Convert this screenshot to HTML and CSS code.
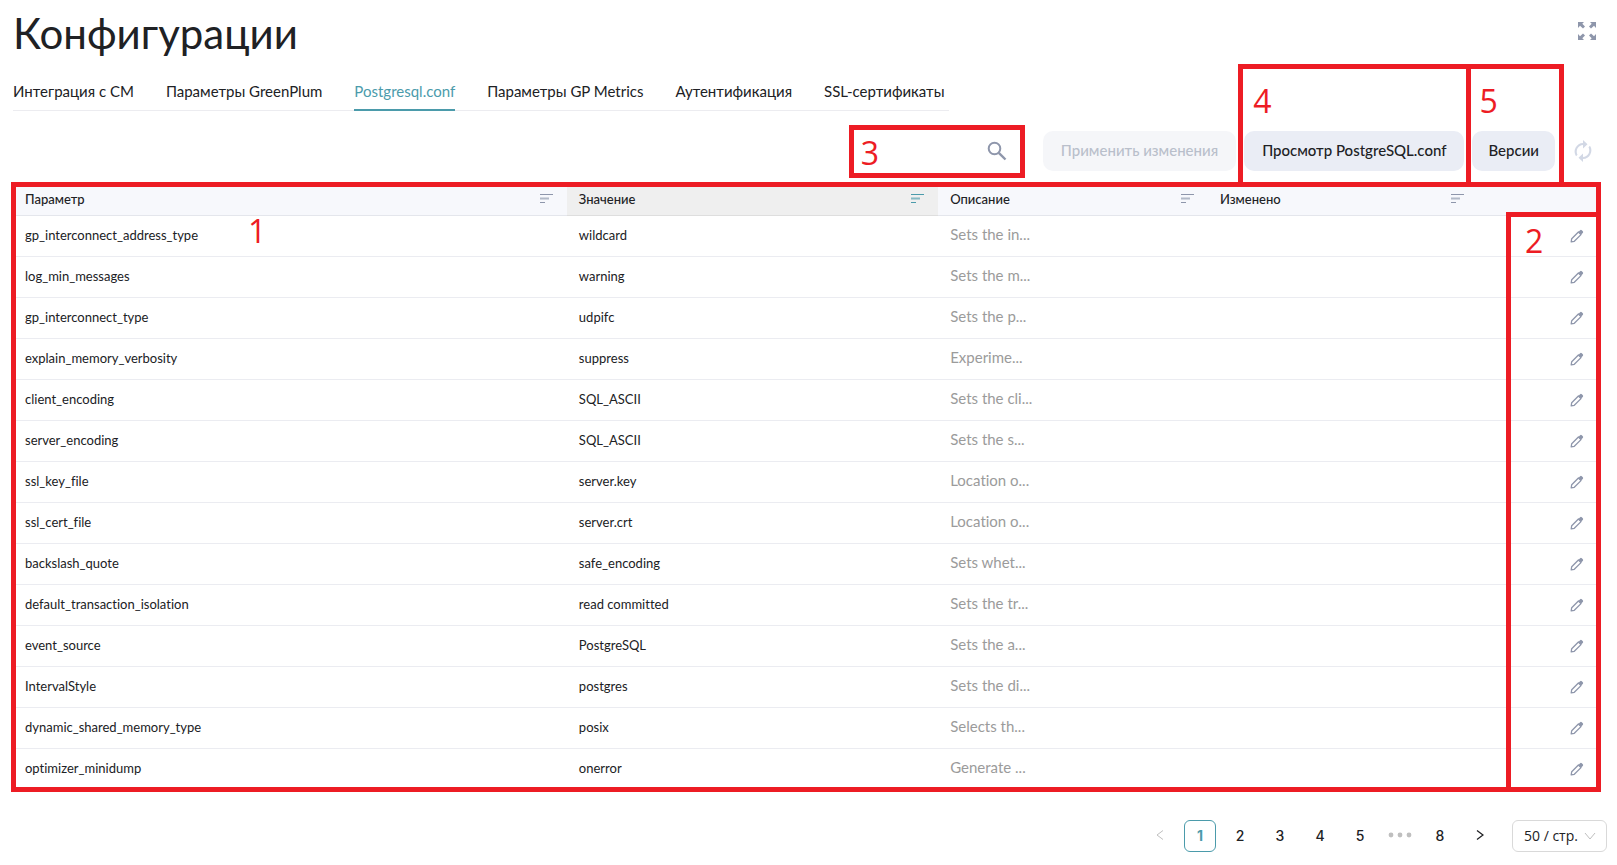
FILE: index.html
```html
<!DOCTYPE html>
<html lang="ru">
<head>
<meta charset="utf-8">
<meta name="viewport" content="width=device-width, initial-scale=1">
<title>Конфигурации</title>
<link rel="stylesheet" href="styles.css">
</head>
<body>
<svg class="sprite" aria-hidden="true">
  <symbol id="i-sort" viewBox="0 0 13 9">
    <path d="M0 .5h13M0 8.5h5" stroke="currentColor" fill="none"/>
    <path d="M0 4.5h9" stroke="currentColor" stroke-width="2" opacity=".65" fill="none"/>
  </symbol>
  <symbol id="i-edit" viewBox="0 0 14 14">
    <path d="M1.2 12.8l.5-3.1 6.7-6.7 2.6 2.6-6.7 6.7z" fill="none" stroke="currentColor" stroke-width="1.3" stroke-linejoin="round"/>
    <path d="M8.4 2.9l1.7-1.7a1.2 1.2 0 0 1 1.7 0l1 1a1.2 1.2 0 0 1 0 1.7l-1.7 1.7z" fill="currentColor"/>
  </symbol>
</svg>
<main class="page">
  <header class="head">
    <h1 class="title">Конфигурации</h1>
    <button class="icon-btn" type="button" aria-label="На весь экран">
      <svg width="20" height="20" viewBox="0 0 20 20" fill="currentColor"><path d="M1 1h6L5.300 2.700 8 5.600 6 7.500 3 4.800 1 7zM19 1h-6l1.700 1.700L12 5.600 14 7.500 17 4.800 19 7zM1 19h6L5.300 17.300 8 14.400 6 12.500 3 15.200 1 13zM19 19h-6l1.700-1.700L12 14.400 14 12.500 17 15.200 19 13z"/></svg>
    </button>
  </header>
  <nav class="tabs">
    <a class="tab" href="#cm">Интеграция с CM</a>
    <a class="tab" href="#greenplum">Параметры GreenPlum</a>
    <a class="tab tab-active" href="#postgresql" aria-current="page">Postgresql.conf</a>
    <a class="tab" href="#metrics">Параметры GP Metrics</a>
    <a class="tab" href="#auth">Аутентификация</a>
    <a class="tab" href="#ssl">SSL-сертификаты</a>
  </nav>
  <div class="toolbar">
    <div class="search">
      <input class="search-input" type="search" aria-label="Поиск">
      <svg class="search-icon" width="20" height="20" viewBox="0 0 20 20" fill="none" stroke="currentColor"><circle cx="7.500" cy="7.500" r="5.800" stroke-width="2"/><path d="M11.800 11.800l6.700 6.700" stroke-width="2.400"/></svg>
      <div class="mark mark-search">3</div>
    </div>
    <button class="btn btn-wide" type="button" disabled>Применить изменения</button>
    <div class="marked">
      <button class="btn btn-wide" type="button">Просмотр PostgreSQL.conf</button>
      <div class="mark mark-view">4</div>
    </div>
    <div class="marked">
      <button class="btn" type="button">Версии</button>
      <div class="mark mark-versions">5</div>
    </div>
    <button class="icon-btn refresh" type="button" aria-label="Обновить">
      <svg width="24" height="24" viewBox="0 0 24 24" fill="currentColor"><path d="M12 4V1L16.500 5.200 12 9.500V6a6.600 6.600 0 0 0-5.500 9.700L5 17.200A8.600 8.600 0 0 1 12 4zM12 20v3L7.500 18.800 12 14.500V18a6.600 6.600 0 0 0 5.500-9.700L19 6.800A8.600 8.600 0 0 1 12 20z"/></svg>
    </button>
  </div>
  <section class="table-wrap">
    <table class="table">
      <colgroup><col class="c-name"><col class="c-value"><col class="c-desc"><col class="c-changed"><col></colgroup>
      <thead>
        <tr>
          <th><div class="th">Параметр<svg width="13" height="9"><use href="#i-sort"/></svg></div></th>
          <th class="sorted" aria-sort="descending"><div class="th">Значение<svg width="13" height="9"><use href="#i-sort"/></svg></div></th>
          <th><div class="th">Описание<svg width="13" height="9"><use href="#i-sort"/></svg></div></th>
          <th><div class="th">Изменено<svg width="13" height="9"><use href="#i-sort"/></svg></div></th>
          <th></th>
        </tr>
      </thead>
      <tbody id="rows"></tbody>
    </table>
    <div class="mark mark-table">1</div>
    <div class="mark mark-edit">2</div>
  </section>
  <nav class="pager" aria-label="Страницы">
    <button class="page-btn" type="button" disabled aria-label="Назад"><svg width="8" height="12" viewBox="0 0 8 12" fill="none" stroke="currentColor"><path d="M7 1.500L1 6l6 4.500"/></svg></button>
    <button class="page-btn page-current" type="button" aria-current="page">1</button>
    <button class="page-btn" type="button">2</button>
    <button class="page-btn" type="button">3</button>
    <button class="page-btn" type="button">4</button>
    <button class="page-btn" type="button">5</button>
    <button class="page-btn page-more" type="button" aria-label="Ещё"><svg width="24" height="6" viewBox="0 0 24 6" fill="currentColor"><circle cx="3" cy="3" r="2.400"/><circle cx="12" cy="3" r="2.400"/><circle cx="21" cy="3" r="2.400"/></svg></button>
    <button class="page-btn" type="button">8</button>
    <button class="page-btn" type="button" aria-label="Вперёд"><svg width="8" height="12" viewBox="0 0 8 12" fill="none" stroke="currentColor" stroke-width="1.300"><path d="M1 1.500L7 6l-6 4.500"/></svg></button>
    <div class="size">
      <select class="size-select" aria-label="Строк на странице"><option>50 / стр.</option></select>
      <svg class="size-arrow" width="12" height="8" viewBox="0 0 12 8" fill="none" stroke="currentColor"><path d="M1 1l5 6 5-6"/></svg>
    </div>
  </nav>
</main>
<script src="rows.js"></script>
</body>
</html>
```
FILE: rows.js
```js
const rows = [
  ["gp_interconnect_address_type", "wildcard", "Sets the in..."],
  ["log_min_messages", "warning", "Sets the m..."],
  ["gp_interconnect_type", "udpifc", "Sets the p..."],
  ["explain_memory_verbosity", "suppress", "Experime..."],
  ["client_encoding", "SQL_ASCII", "Sets the cli..."],
  ["server_encoding", "SQL_ASCII", "Sets the s..."],
  ["ssl_key_file", "server.key", "Location o..."],
  ["ssl_cert_file", "server.crt", "Location o..."],
  ["backslash_quote", "safe_encoding", "Sets whet..."],
  ["default_transaction_isolation", "read committed", "Sets the tr..."],
  ["event_source", "PostgreSQL", "Sets the a..."],
  ["IntervalStyle", "postgres", "Sets the di..."],
  ["dynamic_shared_memory_type", "posix", "Selects th..."],
  ["optimizer_minidump", "onerror", "Generate ..."]
];

document.getElementById("rows").innerHTML = rows.map(([name, value, desc]) => `
  <tr>
    <td>${name}</td>
    <td>${value}</td>
    <td class="desc">${desc}</td>
    <td></td>
    <td class="actions"><button class="icon-btn" type="button" aria-label="Изменить ${name}"><svg width="14" height="14"><use href="#i-edit"/></svg></button></td>
  </tr>`).join("");
```
FILE: styles.css
```css
* { box-sizing: border-box; }

body {
  margin: 0;
  background: #fff;
  color: #202124;
  font-family: Lato, "Open Sans", sans-serif;
  font-size: 15px;
  font-variant-ligatures: none;
}

button, input, select { font: inherit; color: inherit; font-variant-ligatures: none; }
button { cursor: pointer; }
svg { display: block; flex: none; }
.sprite { position: absolute; width: 0; height: 0; }

.page { padding: 7px 10px 12px 13px; }

.head {
  display: flex;
  align-items: flex-start;
  justify-content: space-between;
  padding-right: 10px;
}
.title { margin: 0; font-size: 42px; line-height: 52px; font-weight: 400; }

.icon-btn {
  display: flex;
  padding: 0;
  border: 0;
  background: none;
  color: #8e96ab;
}
.head .icon-btn { margin-top: 14px; }

.tabs {
  display: flex;
  gap: 32px;
  width: fit-content;
  margin-top: 21px;
  padding-right: 4px;
  box-shadow: inset 0 -1px #ececf0;
}
.tab {
  padding-bottom: 7px;
  border-bottom: 2px solid transparent;
  line-height: 22px;
  color: inherit;
  text-decoration: none;
  white-space: nowrap;
}
.tab-active { color: #4b9bab; border-color: #4b9bab; }

.toolbar {
  display: flex;
  justify-content: flex-end;
  gap: 8px;
  margin: 20px 12px 11px 0;
}
.search { position: relative; width: 164px; margin-right: 16px; }
.search-input {
  width: 100%;
  height: 40px;
  padding: 0 40px 0 28px;
  border: 0;
  outline: 0;
  background: none;
}
.search-icon { position: absolute; top: 10px; right: 12px; color: #8e96ab; }

.btn {
  height: 40px;
  padding: 0 16px 2px;
  border: 0;
  border-radius: 10px;
  background: #eaedf5;
  font-weight: 500;
  white-space: nowrap;
}
.btn-wide { padding: 0 18px 2px; }
.btn:disabled { background: #f5f6f9; color: #b9bfcb; cursor: default; }
.marked { position: relative; }
.refresh { align-items: center; margin-left: 8px; color: #d2d8e5; }

.table-wrap { position: relative; margin-right: 7px; }
.table {
  width: 100%;
  border-collapse: separate;
  border-spacing: 0;
  table-layout: fixed;
  font-size: 13px;
}
.c-name { width: 34.900%; }
.c-value { width: 23.400%; }
.c-desc, .c-changed { width: 17%; }
.table th {
  height: 34px;
  padding: 0 14px 0 12px;
  border-bottom: 1px solid #e4e6ec;
  background: #f7f8fc;
  font-weight: 500;
  text-align: left;
}
.table th svg { color: #8e96ab; }
.table .sorted { background: #efefef; border-color: #dedede; }
.table .sorted svg { color: #4b9bab; }
.th { display: flex; align-items: center; justify-content: space-between; }
.table td { height: 41px; padding: 0 12px 2px; border-bottom: 1px solid #ebecf1; }
.table .desc { color: #9b9b9b; font-size: 15px; padding-bottom: 4px; }
.table .actions { padding-right: 16px; padding-bottom: 0; }
.actions .icon-btn { margin-left: auto; }

.mark {
  position: absolute;
  border: 5px solid #ed1c24;
  color: #ed1c24;
  font: 32px/32px "Open Sans", sans-serif;
  pointer-events: none;
}
.mark-table { inset: 0 -1px -2px -2px; padding: 28px 232px; }
.mark-edit { inset: 30px -1px -2px auto; width: 95px; padding: 8px 14px; }
.mark-search { inset: -6px -6px -7px; padding: 7px; }
.mark-view { inset: -67px -7px -16px -6px; padding: 16px 10px; }
.mark-versions { inset: -67px -9px -16px -6px; padding: 16px 8px; }

.pager {
  display: flex;
  justify-content: flex-end;
  gap: 8px;
  margin-top: 30px;
}
.page-btn {
  display: flex;
  align-items: center;
  justify-content: center;
  width: 32px;
  height: 32px;
  padding: 0 0 2px;
  border: 0;
  border-radius: 6px;
  background: none;
  font: 500 14px Inter, sans-serif;
}
.page-btn:disabled, .page-more { color: #bfbfbf; }
.page-current { border: 1px solid #4b9bab; color: #4b9bab; font-weight: 700; }
.size { position: relative; margin-left: 8px; }
.size-select {
  width: 95px;
  height: 32px;
  padding: 0 11px 2px;
  border: 1px solid #d9d9d9;
  border-radius: 6px;
  background: #fff;
  appearance: none;
  font: 14px "Open Sans", sans-serif;
}
.size-arrow { position: absolute; top: 12px; right: 11px; color: #bfbfbf; pointer-events: none; }
```
